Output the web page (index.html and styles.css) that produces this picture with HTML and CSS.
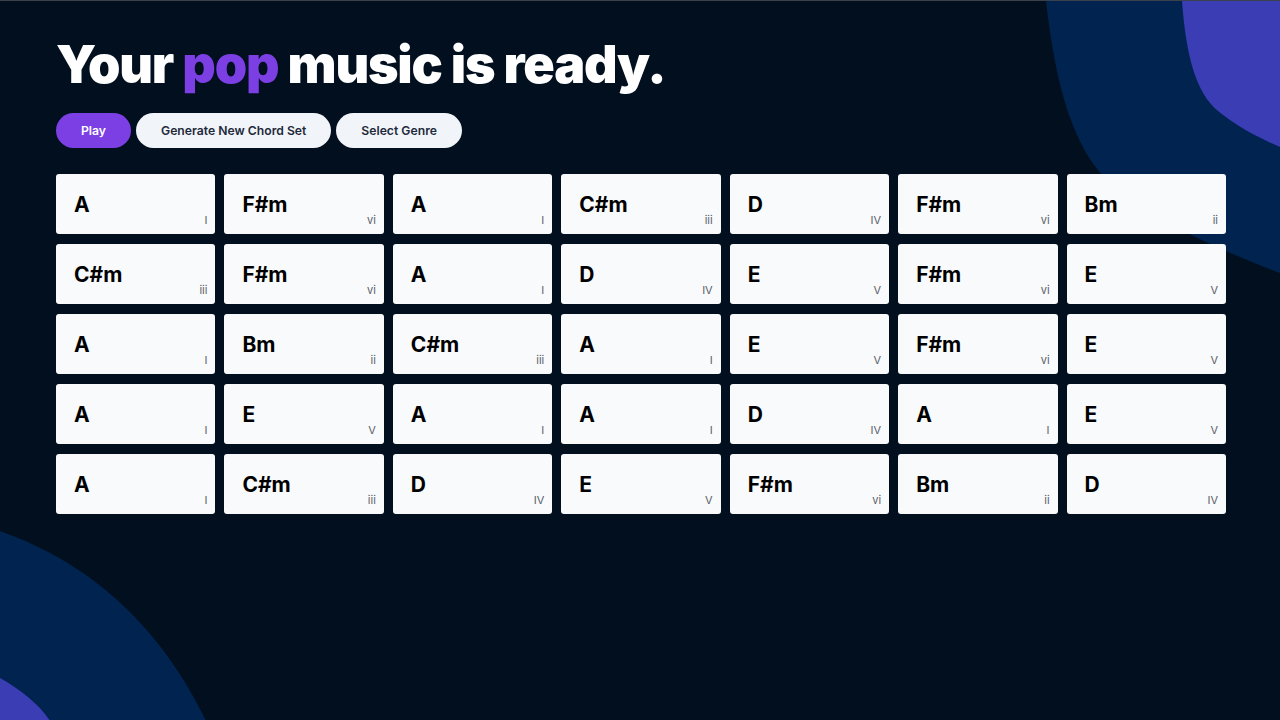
FILE: index.html
```html
<!DOCTYPE html>
<html lang="en">
<head>
<meta charset="utf-8">
<title>Your pop music is ready.</title>
<link rel="stylesheet" href="styles.css">
</head>
<body>
<svg class="blobs" width="1280" height="720" viewBox="0 0 1280 720" aria-hidden="true">
  <path class="blob-dark" d="M1046 0 C1056 90 1075 150 1110 182 C1150 218 1222 250 1280 272 L1280 0 Z"/>
  <path class="blob-light" d="M1182 0 C1186 55 1196 92 1218 110 C1240 128 1262 138 1280 146 L1280 0 Z"/>
  <path class="blob-dark" d="M0 530 C70 555 150 605 206 720 L0 720 Z"/>
  <path class="blob-light" d="M0 677 C20 688 40 704 50 720 L0 720 Z"/>
</svg>
<main class="page">
  <h1 class="title">Your <span class="accent">pop</span> music is ready.</h1>
  <div class="actions">
    <button class="btn btn-primary">Play</button>
    <button class="btn">Generate New Chord Set</button>
    <button class="btn">Select Genre</button>
  </div>
  <section class="grid">
    <div class="card"><span class="chord">A</span><span class="deg">I</span></div>
    <div class="card"><span class="chord">F#m</span><span class="deg">vi</span></div>
    <div class="card"><span class="chord">A</span><span class="deg">I</span></div>
    <div class="card"><span class="chord">C#m</span><span class="deg">iii</span></div>
    <div class="card"><span class="chord">D</span><span class="deg">IV</span></div>
    <div class="card"><span class="chord">F#m</span><span class="deg">vi</span></div>
    <div class="card"><span class="chord">Bm</span><span class="deg">ii</span></div>

    <div class="card"><span class="chord">C#m</span><span class="deg">iii</span></div>
    <div class="card"><span class="chord">F#m</span><span class="deg">vi</span></div>
    <div class="card"><span class="chord">A</span><span class="deg">I</span></div>
    <div class="card"><span class="chord">D</span><span class="deg">IV</span></div>
    <div class="card"><span class="chord">E</span><span class="deg">V</span></div>
    <div class="card"><span class="chord">F#m</span><span class="deg">vi</span></div>
    <div class="card"><span class="chord">E</span><span class="deg">V</span></div>

    <div class="card"><span class="chord">A</span><span class="deg">I</span></div>
    <div class="card"><span class="chord">Bm</span><span class="deg">ii</span></div>
    <div class="card"><span class="chord">C#m</span><span class="deg">iii</span></div>
    <div class="card"><span class="chord">A</span><span class="deg">I</span></div>
    <div class="card"><span class="chord">E</span><span class="deg">V</span></div>
    <div class="card"><span class="chord">F#m</span><span class="deg">vi</span></div>
    <div class="card"><span class="chord">E</span><span class="deg">V</span></div>

    <div class="card"><span class="chord">A</span><span class="deg">I</span></div>
    <div class="card"><span class="chord">E</span><span class="deg">V</span></div>
    <div class="card"><span class="chord">A</span><span class="deg">I</span></div>
    <div class="card"><span class="chord">A</span><span class="deg">I</span></div>
    <div class="card"><span class="chord">D</span><span class="deg">IV</span></div>
    <div class="card"><span class="chord">A</span><span class="deg">I</span></div>
    <div class="card"><span class="chord">E</span><span class="deg">V</span></div>

    <div class="card"><span class="chord">A</span><span class="deg">I</span></div>
    <div class="card"><span class="chord">C#m</span><span class="deg">iii</span></div>
    <div class="card"><span class="chord">D</span><span class="deg">IV</span></div>
    <div class="card"><span class="chord">E</span><span class="deg">V</span></div>
    <div class="card"><span class="chord">F#m</span><span class="deg">vi</span></div>
    <div class="card"><span class="chord">Bm</span><span class="deg">ii</span></div>
    <div class="card"><span class="chord">D</span><span class="deg">IV</span></div>
  </section>
</main>
</body>
</html>
```

FILE: styles.css
```css
html, body {
  margin: 0;
  padding: 0;
}
body {
  width: 1280px;
  height: 720px;
  overflow: hidden;
  background: #020f1e;
  border-top: 1px solid #3a404c;
  box-sizing: border-box;
  font-family: Inter, "Noto Sans", sans-serif;
  position: relative;
}
.blobs {
  position: absolute;
  left: 0;
  top: 0;
  z-index: 0;
}
.blob-dark { fill: #00244f; }
.blob-light { fill: #3a3db4; }

.page {
  position: relative;
  z-index: 1;
  padding: 33px 54px 0 56px;
}
.title {
  margin: 0;
  font-size: 52px;
  line-height: 62px;
  font-weight: 900;
  letter-spacing: -1.2px;
  color: #ffffff;
}
.accent { color: #7b3fe4; }

.actions {
  display: flex;
  gap: 5px;
  margin-top: 17px;
}
.btn {
  height: 35px;
  padding: 0 25px;
  border: none;
  border-radius: 18px;
  background: #f1f5f9;
  color: #1e293b;
  font-family: Inter, sans-serif;
  font-size: 12.2px;
  font-weight: 600;
}
.btn-primary {
  background: #7b3fe4;
  color: #ffffff;
}

.grid {
  margin-top: 26px;
  display: grid;
  grid-template-columns: repeat(7, 1fr);
  column-gap: 9px;
  row-gap: 10px;
  width: 1170px;
}
.card {
  height: 60px;
  box-sizing: border-box;
  background: #f8fafc;
  border-radius: 3px;
  padding: 8px 8px 7px 18px;
  display: flex;
  align-items: center;
  justify-content: space-between;
}
.chord {
  font-size: 21px;
  font-weight: 700;
  color: #000000;
}
.deg {
  align-self: flex-end;
  font-size: 11px;
  line-height: 13px;
  color: #5b6068;
}
```
